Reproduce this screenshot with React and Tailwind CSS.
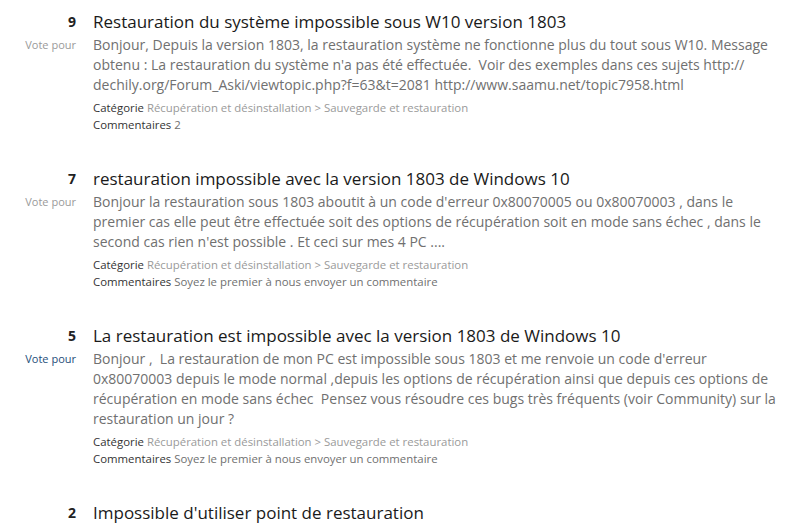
const ITEMS = [
  {
    votes: 9,
    title: "Restauration du système impossible sous W10 version 1803",
    lines: [
      "Bonjour, Depuis la version 1803, la restauration système ne fonctionne plus du tout sous W10. Message",
      "obtenu : La restauration du système n'a pas été effectuée.  Voir des exemples dans ces sujets http://",
      "dechily.org/Forum_Aski/viewtopic.php?f=63&t=2081 http://www.saamu.net/topic7958.html",
    ],
    comments: "2",
  },
  {
    votes: 7,
    title: "restauration impossible avec la version 1803 de Windows 10",
    lines: [
      "Bonjour la restauration sous 1803 aboutit à un code d'erreur 0x80070005 ou 0x80070003 , dans le",
      "premier cas elle peut être effectuée soit des options de récupération soit en mode sans échec , dans le",
      "second cas rien n'est possible . Et ceci sur mes 4 PC ....",
    ],
    comments: "Soyez le premier à nous envoyer un commentaire",
  },
  {
    votes: 5,
    title: "La restauration est impossible avec la version 1803 de Windows 10",
    lines: [
      "Bonjour ,  La restauration de mon PC est impossible sous 1803 et me renvoie un code d'erreur",
      "0x80070003 depuis le mode normal ,depuis les options de récupération ainsi que depuis ces options de",
      "récupération en mode sans échec  Pensez vous résoudre ces bugs très fréquents (voir Community) sur la",
      "restauration un jour ?",
    ],
    comments: "Soyez le premier à nous envoyer un commentaire",
    active: true,
  },
  {
    votes: 2,
    title: "Impossible d'utiliser point de restauration",
    lines: [],
    comments: null,
  },
];

function Idea({ item }) {
  return (
    <div className="flex gap-[17px] mb-[33px]">
      <div className="w-[76px] shrink-0 flex flex-col items-end">
        <div className="h-[26px] leading-[26px] text-[14px] font-bold text-[#222]">
          {item.votes}
        </div>
        {item.lines.length > 0 && (
          <div
            className={`leading-[20px] text-[11px] ${
              item.active ? "text-[#1e4e79]" : "text-[#9a9a9a]"
            }`}
          >
            Vote pour
          </div>
        )}
      </div>
      <div className="flex-1 min-w-0">
        <div className="h-[26px] leading-[26px] text-[17px] text-[#1a1a1a] whitespace-nowrap">
          {item.title}
        </div>
        {item.lines.length > 0 && (
          <>
            <div className="text-[14px] leading-[20px] text-[#707070]">
              {item.lines.map((l, i) => (
                <div key={i} className="whitespace-pre">
                  {l}
                </div>
              ))}
            </div>
            <div className="mt-[4px] text-[11.4px] leading-[17px]">
              <div>
                <span className="text-[#333]">Catégorie</span>{" "}
                <span className="text-[#9a9a9a]">
                  Récupération et désinstallation &gt; Sauvegarde et restauration
                </span>
              </div>
              <div>
                <span className="text-[#333]">Commentaires</span>{" "}
                <span className="text-[#707070]">{item.comments}</span>
              </div>
            </div>
          </>
        )}
      </div>
    </div>
  );
}

export default function App() {
  return (
    <div
      className="w-[797px] h-[527px] overflow-hidden bg-white pt-[9px]"
      style={{ fontFamily: '"Open Sans", "Noto Sans", sans-serif' }}
    >
      {ITEMS.map((item) => (
        <Idea key={item.votes} item={item} />
      ))}
    </div>
  );
}
